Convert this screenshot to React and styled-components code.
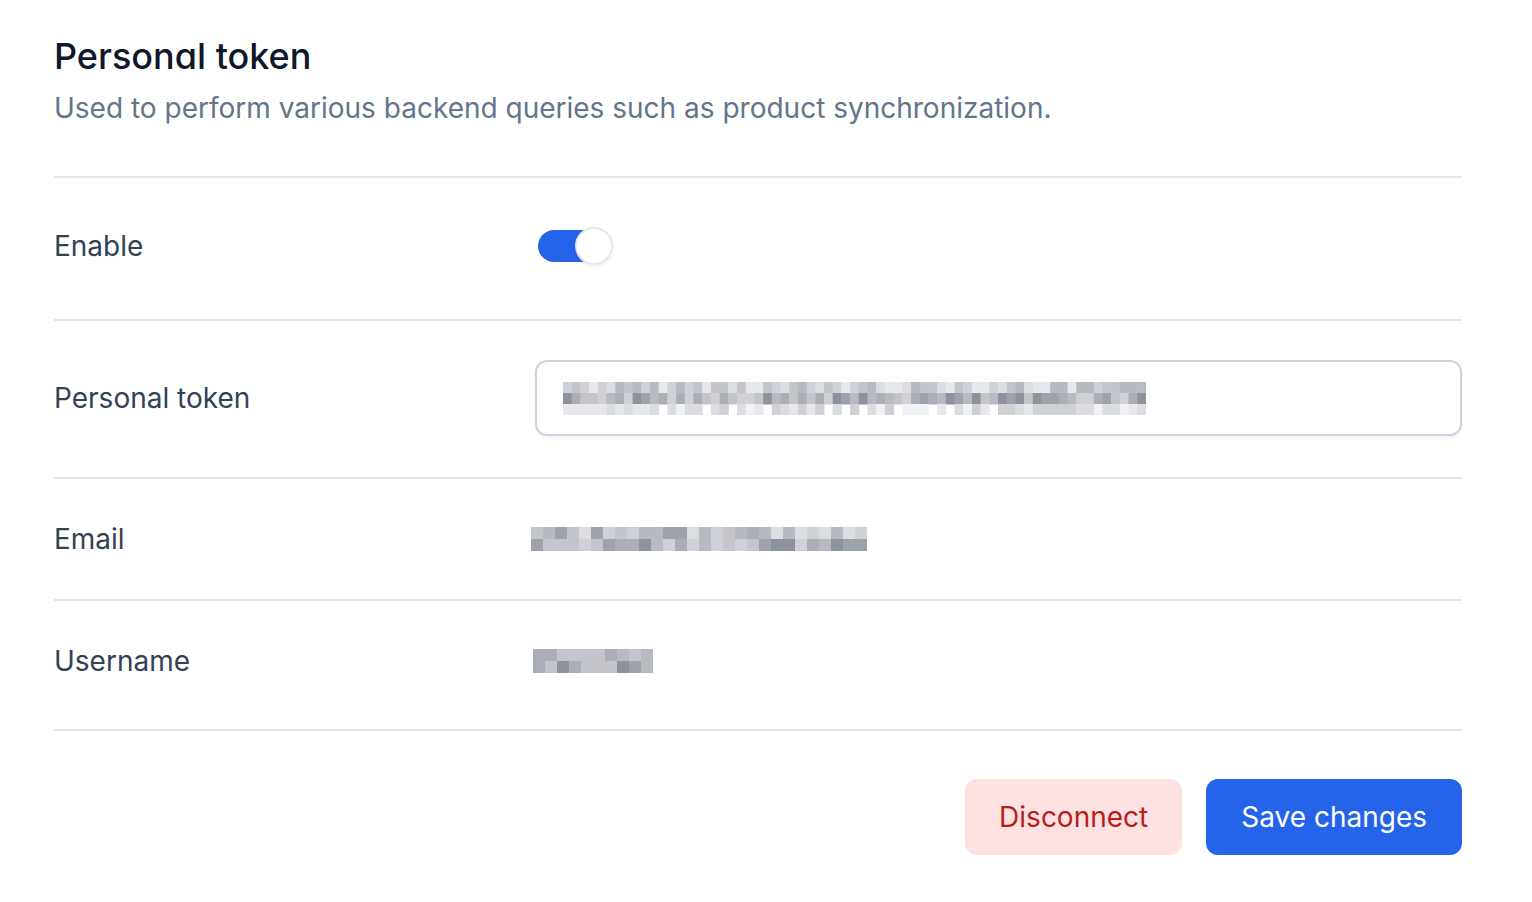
import React from 'react'
import styled, { createGlobalStyle } from 'styled-components'

const GlobalStyle = createGlobalStyle`
  html, body {
    margin: 0;
    padding: 0;
    background: #fff;
    font-family: Inter, "Noto Sans", "Liberation Sans", sans-serif;
  }
  * { box-sizing: border-box; }
`

// deterministic pseudo random so the mosaic stays the same each render
const seeded = (seed) => {
  let s = seed
  return () => {
    s = (s * 9301 + 49297) % 233280
    return s / 233280
  }
}

const shades = ['#8e929c', '#9ea2ab', '#abaeb6', '#b7bac1', '#c3c5cb', '#cfd1d6', '#dcdde1', '#e7e8eb', '#f1f2f4']

// tone: per row, [darkest index, spread, chance to skip a cell]
const Mosaic = ({ cols, rows, cell, rowH, seed, tone }) => {
  const rnd = seeded(seed)
  const rects = []
  for (let r = 0; r < rows; r++) {
    const [base, spread, skip = 0] = tone[r]
    for (let c = 0; c < cols; c++) {
      const v = rnd()
      if (v < skip) continue
      const idx = Math.min(shades.length - 1, base + Math.floor(rnd() * spread))
      rects.push(
        <rect key={r + '-' + c} x={c * cell} y={r * rowH} width={cell + 0.5} height={rowH + 0.5} fill={shades[idx]} />
      )
    }
  }
  return (
    <svg width={cols * cell} height={rows * rowH} style={{ display: 'block' }}>
      {rects}
    </svg>
  )
}

const Page = styled.div`
  padding: 34px 70px 40px 54px;
`

const Header = styled.header`
  padding-bottom: 48px;
  border-bottom: 2px solid #e2e8f0;
`

const Title = styled.h2`
  margin: 0;
  font-size: 36px;
  line-height: 44px;
  font-weight: 500;
  color: #0f172a;
  font-feature-settings: 'cv11';
`

const Subtitle = styled.p`
  margin: 10px 0 0;
  font-size: 28px;
  line-height: 40px;
  color: #64748b;
`

const Row = styled.div`
  display: grid;
  grid-template-columns: 480px 1fr;
  align-items: center;
  height: ${(p) => p.h}px;
  padding-bottom: ${(p) => p.lift || 0}px;
  border-bottom: 2px solid #e2e8f0;
`

const Label = styled.div`
  font-size: 28px;
  line-height: 36px;
  color: #334155;
  font-weight: 400;
`

const Value = styled.div`
  display: flex;
  align-items: center;
  margin-left: ${(p) => p.shift || 0}px;
`

const Track = styled.div`
  position: relative;
  width: 72px;
  height: 32px;
  margin-left: 4px;
  border-radius: 16px;
  background: #2563eb;
`

const Knob = styled.div`
  position: absolute;
  right: -3px;
  top: -3px;
  width: 38px;
  height: 38px;
  border-radius: 50%;
  background: #fff;
  border: 2px solid #e2e8f0;
  box-shadow: 0 2px 4px rgba(15, 23, 42, 0.08);
`

const Input = styled.div`
  flex: 1;
  height: 76px;
  display: flex;
  align-items: center;
  padding: 0 26px;
  border: 2px solid #cbd5e1;
  border-radius: 12px;
  box-shadow: 0 2px 3px rgba(15, 23, 42, 0.06);
`

const Actions = styled.div`
  display: flex;
  justify-content: flex-end;
  gap: 24px;
  padding-top: 48px;
`

const Button = styled.button`
  height: 76px;
  padding: 0 ${(p) => p.px}px;
  border: none;
  border-radius: 12px;
  font-family: inherit;
  font-size: 28px;
  font-weight: 400;
  background: ${(p) => (p.danger ? '#fee2e2' : '#2563eb')};
  color: ${(p) => (p.danger ? '#b91c1c' : '#fff')};
  cursor: pointer;
`

export default function App() {
  return (
    <>
      <GlobalStyle />
      <Page>
        <Header>
          <Title>Personal token</Title>
          <Subtitle>Used to perform various backend queries such as product synchronization.</Subtitle>
        </Header>

        <Row h={143} lift={6}>
          <Label>Enable</Label>
          <Value>
            <Track>
              <Knob />
            </Track>
          </Value>
        </Row>

        <Row h={158} lift={2}>
          <Label>Personal token</Label>
          <Value shift={1}>
            <Input>
              <Mosaic
                cols={67}
                rows={3}
                cell={8.7}
                rowH={11}
                seed={7}
                tone={[[3, 5], [0, 6], [5, 4, 0.1]]}
              />
            </Input>
          </Value>
        </Row>

        <Row h={122}>
          <Label>Email</Label>
          <Value shift={-3}>
            <Mosaic
              cols={28}
              rows={2}
              cell={12}
              rowH={12}
              seed={31}
              tone={[[1, 6], [0, 6]]}
            />
          </Value>
        </Row>

        <Row h={130} lift={8}>
          <Label>Username</Label>
          <Value shift={-1}>
            <Mosaic
              cols={10}
              rows={2}
              cell={12}
              rowH={12}
              seed={53}
              tone={[[2, 5], [0, 5]]}
            />
          </Value>
        </Row>

        <Actions>
          <Button danger px={34}>Disconnect</Button>
          <Button px={35}>Save changes</Button>
        </Actions>
      </Page>
    </>
  )
}
